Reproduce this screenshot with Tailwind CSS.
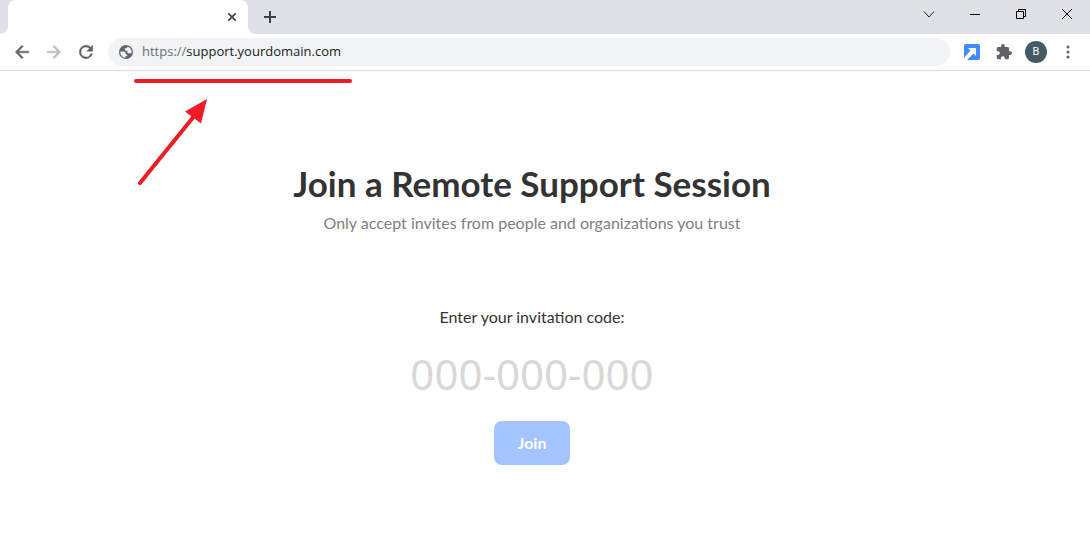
<!DOCTYPE html>
<html lang="en">
<head>
    <meta charset="UTF-8">
    <meta name="viewport" content="width=device-width, initial-scale=1.0">
    <title>Join a Remote Support Session</title>
    <script src="https://cdn.jsdelivr.net/npm/@tailwindcss/browser@4"></script>
</head>
<body class="relative bg-white min-h-screen flex flex-col font-['Lato','Open_Sans',sans-serif] text-[#333333]">
    <!-- Tab strip -->
    <div class="bg-[#dee1e6] h-[34px] flex justify-between">
        <div class="flex">
            <div class="w-2 bg-white"><div class="h-full bg-[#dee1e6] rounded-br-lg"></div></div>
            <div class="w-60 bg-white rounded-t-lg flex items-center justify-end pr-2">
                <button aria-label="Close tab" class="w-4 h-4 flex items-center justify-center">
                    <svg class="w-4 h-4" viewBox="0 0 16 16" fill="none" stroke="#3c4043" stroke-width="1.7"><path d="M4.300 4.300l7.400 7.400M11.700 4.300l-7.400 7.400"/></svg>
                </button>
            </div>
            <div class="w-2 bg-white"><div class="h-full bg-[#dee1e6] rounded-bl-lg"></div></div>
            <button aria-label="New tab" class="w-7 flex items-center justify-center">
                <svg class="w-4 h-4" viewBox="0 0 16 16" fill="none" stroke="#3c4043" stroke-width="2"><path d="M8 2v12M2 8h12"/></svg>
            </button>
        </div>
        <div class="flex pb-[6px]">
            <button aria-label="Search tabs" class="w-[46px] flex items-center justify-center">
                <svg class="w-3 h-3" viewBox="0 0 12 12" fill="none" stroke="#202124" stroke-width="1"><path d="M1 3.500l5 5.500 5-5.500"/></svg>
            </button>
            <button aria-label="Minimize" class="w-[46px] flex items-center justify-center">
                <svg class="w-3 h-3" viewBox="0 0 12 12" fill="none" stroke="#000" stroke-width="1"><path d="M1 6.500h10"/></svg>
            </button>
            <button aria-label="Restore" class="w-[46px] flex items-center justify-center">
                <svg class="w-3 h-3" viewBox="0 0 12 12" fill="none" stroke="#000" stroke-width="1"><path d="M1.500 3.500h7v7h-7zM3.500 3.500v-2h7v7h-2"/></svg>
            </button>
            <button aria-label="Close" class="w-[46px] flex items-center justify-center">
                <svg class="w-3 h-3" viewBox="0 0 12 12" fill="none" stroke="#000" stroke-width="1"><path d="M1 1l10 10M11 1l-10 10"/></svg>
            </button>
        </div>
    </div>

    <!-- Toolbar -->
    <div class="h-[37px] px-[6px] flex items-center border-b border-[#dadce0]">
        <button aria-label="Back" class="w-8 h-8 flex items-center justify-center">
            <svg class="w-5 h-5" viewBox="0 0 24 24" fill="#5f6368" stroke="#5f6368" stroke-width=".6"><path d="M20 11H7.830l5.590-5.590L12 4l-8 8 8 8 1.410-1.410L7.830 13H20z"/></svg>
        </button>
        <button aria-label="Forward" class="w-8 h-8 flex items-center justify-center">
            <svg class="w-5 h-5" viewBox="0 0 24 24" fill="#babcbe" stroke="#babcbe" stroke-width=".6"><path d="M12 4l-1.410 1.410L16.170 11H4v2h12.170l-5.580 5.590L12 20l8-8z"/></svg>
        </button>
        <button aria-label="Reload" class="w-8 h-8 flex items-center justify-center">
            <svg class="w-5 h-5" viewBox="0 0 24 24" fill="#5f6368" stroke="#5f6368" stroke-width=".6"><path d="M17.650 6.350A7.960 7.960 0 0 0 12 4a8 8 0 1 0 7.730 10h-2.080A6 6 0 1 1 12 6c1.660 0 3.140.69 4.220 1.780L13 11h7V4z"/></svg>
        </button>
        <div class="flex-1 h-7 mx-[6px] px-[10px] bg-[#f1f3f4] rounded-full flex items-center">
            <svg class="w-4 h-4" viewBox="0 0 16 16">
                <circle cx="8" cy="8" r="7" fill="#5f6368"/>
                <path d="M2.300 7.600h3.200c1.400 0 2.300.8 2.300 2v1h1.400v1.600H7.300v1.700A5.800 5.800 0 0 1 2.300 7.600z" fill="#f1f3f4"/>
                <path d="M9.300 2.400v.5c0 .7-.6 1.300-1.300 1.300H6.800v1.200c0 .9.600 1.300 1.400 1.300h1.100v1.500c0 .6.500 1 1.100 1h3.200A5.800 5.800 0 0 0 9.300 2.400z" fill="#f1f3f4"/>
            </svg>
            <a href="https://support.yourdomain.com" class="ml-2 font-['Open_Sans',sans-serif] text-[13px] text-[#202124]"><span class="text-[#6b6f74]">https://</span>support.yourdomain.com</a>
        </div>
        <button aria-label="Remote support extension" class="w-8 h-8 flex items-center justify-center">
            <svg class="w-4 h-4" viewBox="0 0 16 16"><rect width="16" height="16" rx="2" fill="#4388ff"/><path d="M4 4h8v8l-2.500-2.500L3 16H0v-2l6.500-7.500z" fill="#fff"/></svg>
        </button>
        <button aria-label="Extensions" class="w-8 h-8 flex items-center justify-center">
            <svg class="w-4 h-4" viewBox="1 1 22 22" fill="#5f6368"><path d="M20.500 11H19V7c0-1.100-.9-2-2-2h-4V3.500a2.500 2.500 0 0 0-5 0V5H4c-1.100 0-2 .9-2 2v3.800h1.500a2.700 2.700 0 0 1 0 5.400H2V20c0 1.100.9 2 2 2h3.800v-1.500a2.700 2.700 0 0 1 5.400 0V22H17c1.100 0 2-.9 2-2v-4h1.500a2.500 2.500 0 0 0 0-5z"/></svg>
        </button>
        <button aria-label="Profile" class="w-8 h-8 flex items-center justify-center">
            <span class="w-[22px] h-[22px] rounded-full bg-[#455a64] text-white text-[11px] font-['Roboto',sans-serif] flex items-center justify-center">B</span>
        </button>
        <button aria-label="Menu" class="w-8 h-8 flex items-center justify-center">
            <svg class="w-4 h-4" viewBox="0 0 16 16" fill="#5f6368"><circle cx="8" cy="3" r="1.500"/><circle cx="8" cy="8" r="1.500"/><circle cx="8" cy="13" r="1.500"/></svg>
        </button>
    </div>

    <!-- Page content -->
    <main class="flex-grow flex flex-col items-center pr-[26px] pt-[88px]">
        <h1 class="text-[35px] leading-12 font-bold">Join a Remote Support Session</h1>
        <p class="mt-1 text-base text-[#808080]">Only accept invites from people and organizations you trust</p>

        <form class="mt-[70px] flex flex-col items-center">
            <label for="code" class="text-base">Enter your invitation code:</label>
            <input
                type="text"
                id="code"
                name="code"
                class="mt-4 w-[300px] h-14 font-['Noto_Sans',sans-serif] text-[42px] text-center focus:outline-none placeholder:text-[#d8d8d8]"
                placeholder="000-000-000"
            />
            <button type="submit" class="mt-5 w-[76px] h-11 rounded-lg bg-[#a4c4ff] text-white text-base font-bold">Join</button>
        </form>
    </main>

    <!-- Marker under the address, with arrow -->
    <svg class="absolute left-[130px] top-[76px] w-[226px] h-[114px] pointer-events-none" viewBox="0 0 226 114" fill="none" stroke="#ee1c25" stroke-width="4" stroke-linecap="round">
        <path d="M6 5h214M10 107L65 39"/>
        <path d="M77 23L55 35.500 71 47.500z" fill="#ee1c25" stroke="none"/>
    </svg>
</body>
</html>
